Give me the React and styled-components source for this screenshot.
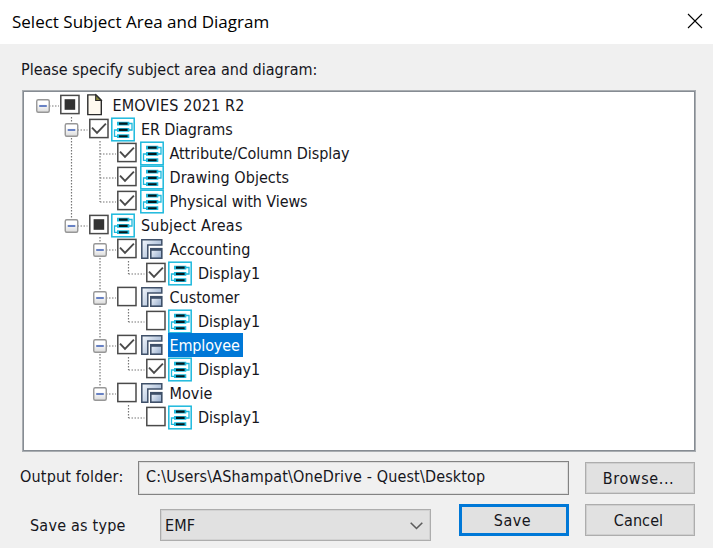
import React from "react";
import styled, { createGlobalStyle, css } from "styled-components";

const GlobalStyle = createGlobalStyle`
  * { box-sizing: border-box; }
  body {
    margin: 0;
    background: #f0f0f0;
    overflow: hidden;
    color: #16161c;
    font: 16px/24px "DejaVu Sans Condensed", "DejaVu Sans", sans-serif;
  }
  svg { display: block; flex: none; }
`;

const Dialog = styled.main`
  display: flex;
  flex-direction: column;
  width: 713px;
  height: 548px;
  background: #f0f0f0;
`;

const TitleBar = styled.header`
  display: flex;
  align-items: center;
  justify-content: space-between;
  flex: none;
  height: 44px;
  padding: 0 10px 1px 12px;
  background: #fff;
  color: #000;
  font: 17px/24px "Open Sans", "Noto Sans", sans-serif;
`;

const Title = styled.h1`
  margin: 0;
  font: inherit;
`;

const CloseButton = styled.button`
  padding: 0;
  margin-top: -2px;
  border: 0;
  background: none;
`;

const Content = styled.section`
  display: flex;
  flex-direction: column;
  padding: 14px 17px 0 20px;
`;

const Label = styled.span`
  white-space: pre;
  letter-spacing: ${(p) => p.$track || 0}px;
`;

const Prompt = styled(Label)`
  padding-left: 1px;
`;

const Tree = styled.div`
  height: 362px;
  margin: 8px 0 0 2px;
  padding-top: 2px;
  border: 1px solid #a9adb1;
  outline: 1px solid #868c93;
  outline-offset: -2px;
  background: #fff;
`;

const TreeRow = styled.div`
  display: flex;
  align-items: flex-start;
  height: 24px;
  padding-left: 1px;
`;

const IconSlot = styled.span`
  flex: none;
  width: 30.5px;
  padding-left: ${(p) => p.$inset}px;
`;

const NodeLabel = styled(Label)`
  height: 24px;
  padding: 1px 3px 0 2px;
  line-height: 24px;
  ${(p) =>
    p.$selected &&
    css`
      background: #0078d7;
      color: #fff;
    `}
`;

const OutputRow = styled.div`
  display: flex;
  align-items: flex-start;
  margin-top: 9px;
`;

const SaveRow = styled.div`
  display: flex;
  align-items: flex-start;
  margin-top: 9px;
`;

const FieldLabel = styled(Label)`
  flex: none;
  width: ${(p) => p.$width}px;
  padding: ${(p) => p.$top}px 0 0 ${(p) => p.$left || 0}px;
`;

const PathField = styled.div`
  flex: none;
  width: 431px;
  height: 34px;
  padding: 3px 0 0 7px;
  border: 1px solid #838383;
  box-shadow: inset 0 0 0 1px #dcdcdc;
`;

const Select = styled.div`
  display: flex;
  align-items: center;
  justify-content: space-between;
  width: 271px;
  height: 32px;
  margin-top: 5px;
  padding: 1px 7px 0 4px;
  border: 1px solid #adadad;
  box-shadow: inset 0 0 0 1px #d2d2d2;
  background: #e1e1e1;
`;

const Button = styled.button`
  flex: none;
  width: 110px;
  height: 32px;
  margin: ${(p) => p.$top || 0}px 0 0 ${(p) => p.$gap}px;
  padding: 2px 3px 0 0;
  border: ${(p) => (p.$primary ? "3px solid #0078d7" : "1px solid #adadad")};
  box-shadow: ${(p) => (p.$primary ? "none" : "inset 0 0 0 1px #cfcfcf")};
  background: #e1e1e1;
  color: inherit;
  font: inherit;
`;

const STEP = 28.5;

/* Dotted connectors and the collapse box that precede a node's checkbox. */
function Guides({ level, expandable, last, through = [] }) {
  const width = 36 + STEP * level;
  const x = 19 + STEP * level;
  const dots = { stroke: "#777", strokeWidth: 1.2, strokeDasharray: "1.5 1.5" };
  return (
    <svg width={width} height="24">
      {through.map((l) => (
        <path key={l} d={`M${19 + STEP * l} 0V24`} {...dots} />
      ))}
      {level > 0 && <path d={`M${x} 0V${last ? 13 : 24}`} {...dots} />}
      <path d={`M${x} 13H${width - 1}`} {...dots} />
      {expandable && (
        <>
          <rect x={x - 6.25} y="6.75" width="12.5" height="12.5" rx="1.5" fill="url(#boxFill)" stroke="#979797" strokeWidth="1.4" />
          <path d={`M${x - 3.8} 13H${x + 3.8}`} stroke="#4464b8" strokeWidth="1.6" />
        </>
      )}
    </svg>
  );
}

function Checkbox({ state }) {
  return (
    <svg width="20" height="24" fill="none">
      <rect x="0.8" y="2.4" width="18.2" height="18.2" fill="#fff" stroke="#4a4a4a" strokeWidth="1.5" />
      {state === "on" && <path d="M3 10.6 8 15.8 16.9 6.7" stroke="#4a4a4a" strokeWidth="1.9" />}
      {state === "mixed" && <path d="M4.6 6.2H15.2V16.8H4.6Z" fill="#333" />}
    </svg>
  );
}

function DocumentIcon() {
  return (
    <svg width="17" height="24">
      <path d="M0.8 1.9H9L14.3 7.3V21.6H0.8Z" fill="#fffaf0" stroke="#2b2b2b" strokeWidth="1.4" />
      <path d="M8.7 1.9V7.5H14.3Z" fill="#8c8a3c" stroke="#2b2b2b" strokeWidth="1.1" />
    </svg>
  );
}

function DiagramIcon() {
  return (
    <svg width="24" height="24" overflow="visible">
      <rect x="0.8" y="1.2" width="22.4" height="22.6" fill="#fff" stroke="#1db9dd" strokeWidth="1.5" />
      <path d="M17 6.5H21V13H17M7 13H3.5V19.4H7" fill="none" stroke="#1db9dd" strokeWidth="1.3" />
      <path d="M6 4.7H18.3V8.5H6ZM6 11H18.3V14.8H6ZM6 17.3H18.3V21.1H6Z" fill="#1db9dd" />
      <path d="M8 6.6H16.6M8 12.9H16.6M8 19.2H16.6" stroke="#06171c" strokeWidth="2.1" />
    </svg>
  );
}

function AreaIcon() {
  return (
    <svg width="24" height="24">
      <path d="M0.8 2.8H20.8V8H6.8V21.2H0.8Z" fill="url(#areaFill)" stroke="#3f5069" strokeWidth="1.5" />
      <rect x="9.8" y="11.7" width="11" height="9.5" fill="url(#areaFill)" stroke="#3f5069" strokeWidth="1.6" />
      <path d="M10 12.9H20.6" stroke="#3f5069" strokeWidth="1.8" />
    </svg>
  );
}

const ICONS = {
  document: { Icon: DocumentIcon, inset: 7 },
  diagram: { Icon: DiagramIcon, inset: 2.5 },
  area: { Icon: AreaIcon, inset: 4 },
};

const NODES = [
  { text: "EMOVIES 2021 R2", track: 0.15, level: 0, icon: "document", state: "mixed", expandable: true },
  { text: "ER Diagrams", track: -0.13, level: 1, icon: "diagram", state: "on", expandable: true },
  { text: "Attribute/Column Display", track: -0.05, level: 2, icon: "diagram", state: "on", through: [1] },
  { text: "Drawing Objects", track: 0.05, level: 2, icon: "diagram", state: "on", through: [1] },
  { text: "Physical with Views", track: -0.1, level: 2, icon: "diagram", state: "on", through: [1], last: true },
  { text: "Subject Areas", track: 0.2, level: 1, icon: "diagram", state: "mixed", expandable: true, last: true },
  { text: "Accounting", track: 0.05, level: 2, icon: "area", state: "on", expandable: true },
  { text: "Display1", level: 3, icon: "diagram", state: "on", through: [2], last: true },
  { text: "Customer", level: 2, icon: "area", state: "off", expandable: true },
  { text: "Display1", level: 3, icon: "diagram", state: "off", through: [2], last: true },
  { text: "Employee", track: -0.15, level: 2, icon: "area", state: "on", expandable: true, selected: true },
  { text: "Display1", level: 3, icon: "diagram", state: "on", through: [2], last: true },
  { text: "Movie", track: 0.05, level: 2, icon: "area", state: "off", expandable: true, last: true },
  { text: "Display1", level: 3, icon: "diagram", state: "off", last: true },
];

function TreeNode({ node }) {
  const { Icon, inset } = ICONS[node.icon];
  return (
    <TreeRow>
      <Guides {...node} />
      <Checkbox state={node.state} />
      <IconSlot $inset={inset}>
        <Icon />
      </IconSlot>
      <NodeLabel $track={node.track} $selected={node.selected}>
        {node.text}
      </NodeLabel>
    </TreeRow>
  );
}

function Gradients() {
  return (
    <defs>
      <linearGradient id="boxFill" x1="0" y1="0" x2="0" y2="1">
        <stop offset="0.3" stopColor="#fff" />
        <stop offset="1" stopColor="#dadada" />
      </linearGradient>
      <linearGradient id="areaFill" x1="0" y1="0" x2="1" y2="0.6">
        <stop offset="0" stopColor="#f4f8fd" />
        <stop offset="1" stopColor="#9fb4d2" />
      </linearGradient>
    </defs>
  );
}

export default function App() {
  return (
    <Dialog>
      <GlobalStyle />
      <TitleBar>
        <Title>Select Subject Area and Diagram</Title>
        <CloseButton aria-label="Close">
          <svg width="16" height="16">
            <Gradients />
            <path d="M1 1 15 15M15 1 1 15" stroke="#000" strokeWidth="1.1" />
          </svg>
        </CloseButton>
      </TitleBar>
      <Content>
        <Prompt>Please specify subject area and diagram:</Prompt>
        <Tree>
          {NODES.map((node, i) => (
            <TreeNode key={i} node={node} />
          ))}
        </Tree>
        <OutputRow>
          <FieldLabel $width={118} $top={4} $track={0.18}>Output folder:</FieldLabel>
          <PathField>
            <Label $track={0.15}>{"C:\\Users\\AShampat\\OneDrive - Quest\\Desktop"}</Label>
          </PathField>
          <Button $gap={16} $top={1}>
            <Label $track={0.6}>Browse...</Label>
          </Button>
        </OutputRow>
        <SaveRow>
          <FieldLabel $width={140} $left={10} $top={10} $track={0.22}>Save as type</FieldLabel>
          <Select>
            <Label $track={0.1}>EMF</Label>
            <svg width="13" height="8">
              <path d="M0.7 0.8 6.5 6.5 12.3 0.8" fill="none" stroke="#5c5c5c" strokeWidth="1.6" />
            </svg>
          </Select>
          <Button $gap={28} $primary>
            <Label $track={0.5}>Save</Label>
          </Button>
          <Button $gap={16}>
            <Label $track={0.1}>Cancel</Label>
          </Button>
        </SaveRow>
      </Content>
    </Dialog>
  );
}
